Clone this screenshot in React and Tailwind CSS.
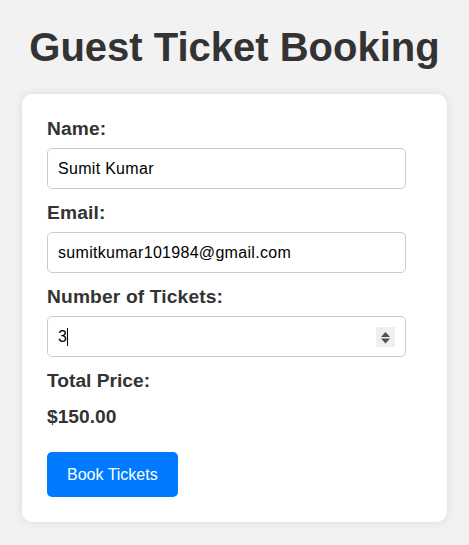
import React, { useState } from 'react';

const Field = ({ label, children }) => (
  <div className="mb-[13px]">
    <label className="block mb-2 text-[19.2px] leading-[22px] font-bold text-[#333] tracking-[0.15px]">{label}</label>
    {children}
  </div>
);

const inputCls =
  'block w-[359px] h-[41px] px-[10px] border border-[#ccc] rounded-[5px] bg-white text-[16px] tracking-[0.3px] text-black outline-none focus:outline-none';

export default function App() {
  const [name, setName] = useState('Sumit Kumar');
  const [email, setEmail] = useState('sumitkumar101984@gmail.com');
  const [count, setCount] = useState(3);
  const total = (Number(count) || 0) * 50;

  const step = d => setCount(c => Math.max(1, (Number(c) || 0) + d));

  return (
    <div className="min-h-screen bg-[#f2f2f2] pt-6 font-['Liberation_Sans',Arial,sans-serif]">
      <h1 className="text-center text-[40px] leading-[46px] font-bold text-[#333]">Guest Ticket Booking</h1>
      <form
        className="mx-auto mt-6 w-[425px] bg-white rounded-[10px] pt-6 px-[25px] pb-[25px] shadow-[0_0_10px_rgba(0,0,0,0.1)]"
        onSubmit={e => e.preventDefault()}
      >
        <Field label="Name:">
          <input type="text" value={name} onChange={e => setName(e.target.value)} className={inputCls} />
        </Field>
        <Field label="Email:">
          <input type="email" value={email} onChange={e => setEmail(e.target.value)} className={inputCls} />
        </Field>
        <Field label="Number of Tickets:">
          <div className="relative w-[359px]">
            <input
              type="number"
              min="1"
              value={count}
              onChange={e => setCount(e.target.value)}
              className={inputCls + ' [appearance:textfield] [&::-webkit-inner-spin-button]:appearance-none [&::-webkit-outer-spin-button]:appearance-none'}
            />
            {/* text caret */}
            <span className="pointer-events-none absolute left-[20px] top-[12px] h-[18px] w-px bg-black" />
            {/* spinner */}
            <span className="absolute right-[11px] top-[11px] flex h-[20px] w-[19px] flex-col bg-[#efefef]">
              <button type="button" className="h-[10px] w-full" onClick={() => step(1)}>
                <svg width="19" height="10" viewBox="0 0 19 10" className="block">
                  <path d="M5 10 L9.5 5 L14 10 Z" fill="#505050" />
                </svg>
              </button>
              <button type="button" className="h-[10px] w-full" onClick={() => step(-1)}>
                <svg width="19" height="10" viewBox="0 0 19 10" className="block">
                  <path d="M5 1.5 L14 1.5 L9.5 6.5 Z" fill="#505050" />
                </svg>
              </button>
            </span>
          </div>
        </Field>
        <div className="text-[19.2px] leading-[22px] font-bold text-[#333]">Total Price:</div>
        <div className="mt-[14px] text-[19.2px] leading-[22px] font-bold text-[#333]">${total.toFixed(2)}</div>
        <button
          type="submit"
          className="mt-6 h-[45px] px-5 rounded-[5px] bg-[#007bff] text-white text-[16px]"
        >
          Book Tickets
        </button>
      </form>
    </div>
  );
}
